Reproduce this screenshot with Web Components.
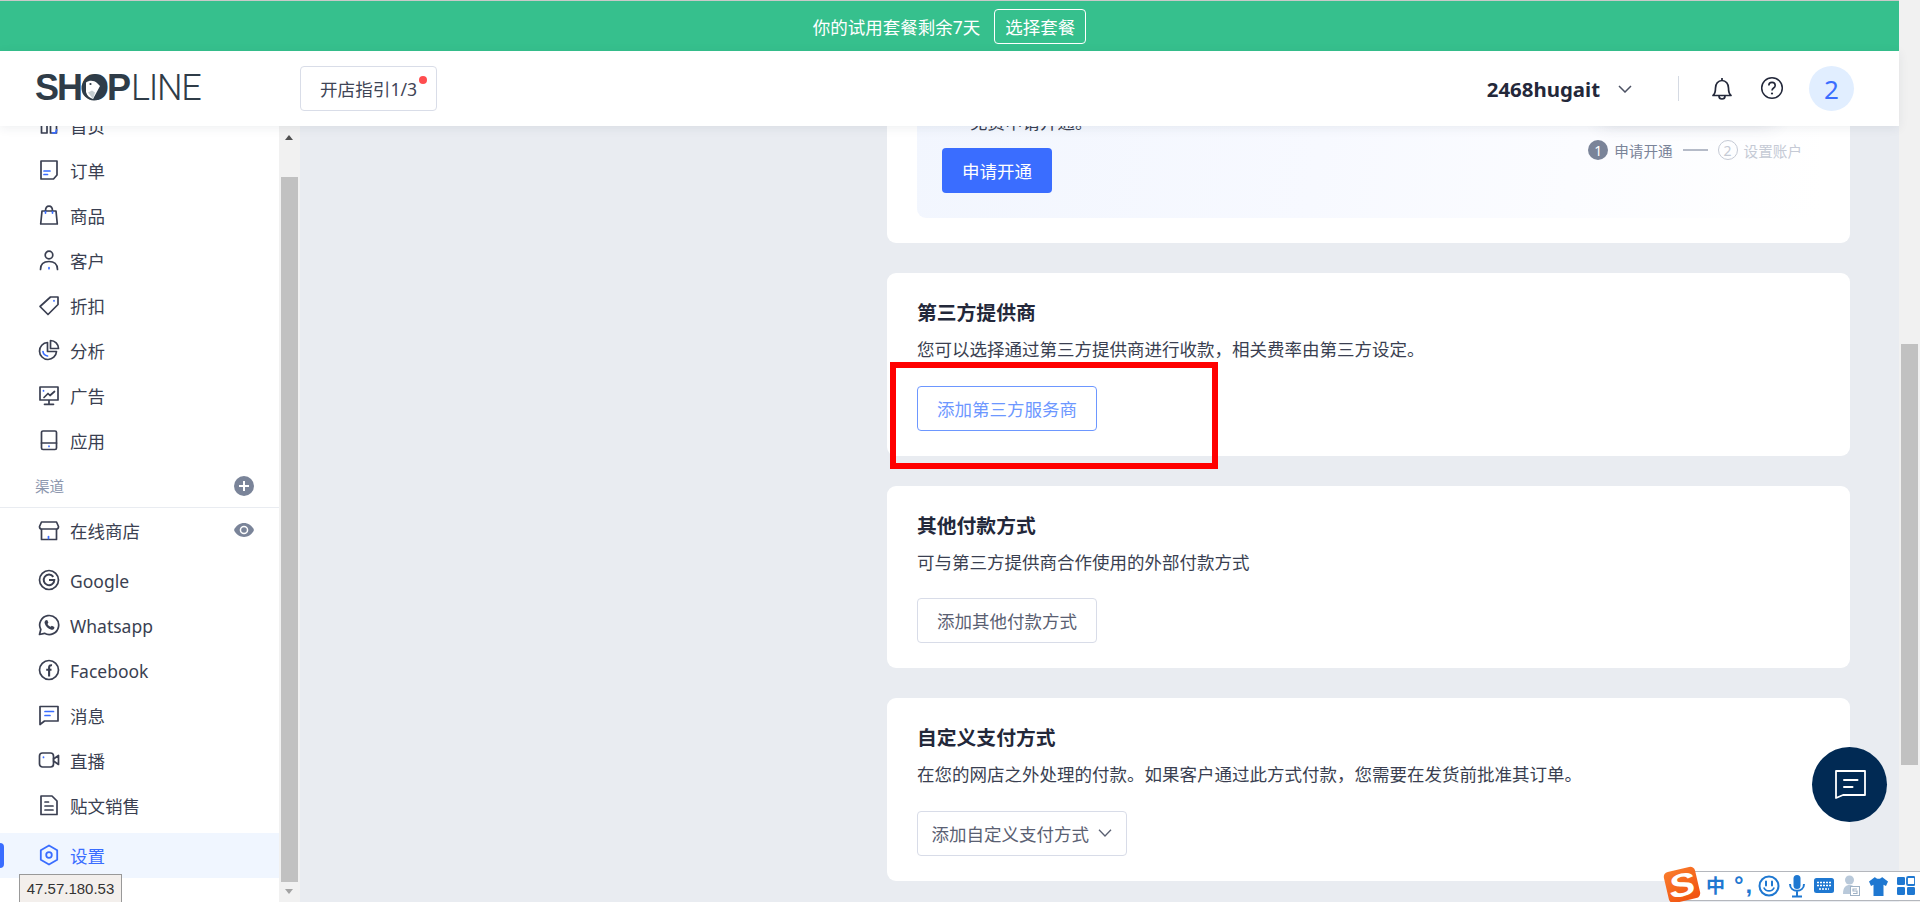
<!DOCTYPE html>
<html lang="zh">
<head>
<meta charset="utf-8">
<title>SHOPLINE</title>
<style>
html, body { margin: 0; height: 902px; overflow: hidden; background: #e9ecf1; }
body { font-family: "Noto Sans", "Noto Sans CJK SC", sans-serif; color: #2d3142; }
</style>
</head>
<body>
<app-shell>
  <trial-banner slot="banner" action="选择套餐">你的试用套餐剩余7天</trial-banner>
  <top-header slot="header" account="2468hugait" avatar="2"></top-header>
  <side-nav slot="nav">
    <nav-item icon="home">首页</nav-item>
    <nav-item icon="order">订单</nav-item>
    <nav-item icon="bag">商品</nav-item>
    <nav-item icon="user">客户</nav-item>
    <nav-item icon="tag">折扣</nav-item>
    <nav-item icon="pie">分析</nav-item>
    <nav-item icon="screen">广告</nav-item>
    <nav-item icon="tablet">应用</nav-item>
    <nav-section>渠道</nav-section>
    <nav-item icon="store" trail="eye">在线商店</nav-item>
    <nav-item icon="google" latin class="gap">Google</nav-item>
    <nav-item icon="whatsapp" latin>Whatsapp</nav-item>
    <nav-item icon="facebook" latin>Facebook</nav-item>
    <nav-item icon="message">消息</nav-item>
    <nav-item icon="video">直播</nav-item>
    <nav-item icon="post">贴文销售</nav-item>
    <nav-item icon="settings" active class="gap">设置</nav-item>
  </side-nav>
  <pay-main slot="main">
    <settings-card flush>
      <apply-panel></apply-panel>
    </settings-card>
    <settings-card heading="第三方提供商" desc="您可以选择通过第三方提供商进行收款，相关费率由第三方设定。">
      <line-button kind="primary">添加第三方服务商</line-button>
    </settings-card>
    <settings-card heading="其他付款方式" desc="可与第三方提供商合作使用的外部付款方式">
      <line-button>添加其他付款方式</line-button>
    </settings-card>
    <settings-card heading="自定义支付方式" desc="在您的网店之外处理的付款。如果客户通过此方式付款，您需要在发货前批准其订单。">
      <line-button caret>添加自定义支付方式</line-button>
    </settings-card>
  </pay-main>
</app-shell>

<script>
const dark = 'fill="none" stroke="#3a3f51" stroke-width="1.7" stroke-linejoin="round" stroke-linecap="round"'
const blue = 'fill="none" stroke="#3a6dff" stroke-width="1.7" stroke-linecap="round"'

// Iconos de la barra lateral, todos sobre una caja de 22x22
const navIcons = {
  home: `<path ${dark} d="M3.500 4v15h5.500V4zM12.500 4v15h6V4z"/><path ${blue} stroke-width="2" d="M14.500 18.800h3.200l1-3"/>`,
  order: `<path ${dark} d="M3 2h16v14l-3.500 4H3z"/><path ${blue} d="M6 12h6M6 15.500h3.500"/>`,
  bag: `<path ${dark} d="M4 7h14l1.300 13H2.700z"/><path ${dark} d="M7.500 7c0-6.500 7-6.500 7 0"/><path ${blue} stroke-width="1.500" d="M7.500 7.500v1.600M14.500 7.500v1.600"/>`,
  user: `<circle ${dark} cx="11" cy="6" r="3.800"/><path ${dark} d="M2.500 20.500c0-5.500 3.500-8 8.500-8s8.500 2.500 8.500 8"/><path ${blue} stroke-width="2" d="M11 18.700v1"/>`,
  tag: `<path ${dark} d="M12.500 3h7.500v7.500L10 20.500 2 12.500z"/><path ${blue} stroke-width="2" d="M16 6.500v.5"/>`,
  pie: `<path ${dark} d="M9.500 3.500a8.500 8.500 0 1 0 9 9h-9z"/><path ${dark} d="M12.500 1.500a8 8 0 0 1 8 8h-8z"/><path ${blue} d="M5 12.500c.3 2.500 2 4 4.500 4.500"/>`,
  screen: `<path ${dark} d="M2 3h18v13H2zM11 16v4M6.500 20.300h9"/><path ${dark} stroke-width="1.400" d="M6 13.500l4-4 2 2 4.500-4"/><path ${blue} stroke-width="2" d="M5.500 6.500v.5"/>`,
  tablet: `<rect ${dark} x="3.500" y="2" width="15" height="18.500" rx="1.500"/><path ${dark} d="M3.500 14h15"/><path ${blue} stroke-width="2" d="M11 17v.5"/>`,
  store: `<path ${dark} d="M3.500 3h15l2 4.500c0 1.800-1 2.500-2 2.500s-7.500 0-15 0c-1 0-2-.7-2-2.500zM3.500 10v10.500h15V10"/><path ${blue} stroke-width="2.200" d="M10.500 17.500v2"/>`,
  google: `<circle ${dark} cx="11" cy="11" r="9.500"/><path fill="none" stroke="#3a3f51" stroke-width="2" stroke-linecap="butt" d="M15.300 7.800A5.300 5.300 0 1 0 16.300 11H11"/>`,
  whatsapp: `<path ${dark} d="M1.500 20.500l1.300-5A9.500 9.500 0 1 1 6.500 19.300z"/><path fill="#3a3f51" d="M7.800 6.200l1.400-.2 1.200 2.600-.9 1.300c.7 1.300 1.700 2.200 3.100 2.900l1.200-1 2.600 1.200-.2 1.500c-.5 1-1.600 1.400-2.800 1.200-3.400-.7-6.100-3.400-6.800-6.700-.2-1.200.3-2.200 1.200-2.800z"/>`,
  facebook: `<circle ${dark} cx="11" cy="11" r="9.500"/><path fill="none" stroke="#3a3f51" stroke-width="2.100" stroke-linecap="butt" d="M14 6.300c-2-.3-2.900.5-2.900 2.300v8.900M8.200 10.800h5.300"/>`,
  message: `<path ${dark} d="M2 2.500h18v14.500H6.500L2 20.500z"/><path ${blue} d="M7 7.500h8.500M7 11.500h5"/>`,
  video: `<rect ${dark} x="1.500" y="4" width="14" height="14" rx="3"/><path ${dark} d="M15.500 10l5-3.500v9l-5-3.500"/><path ${blue} stroke-width="2" d="M5.500 8v.5"/>`,
  post: `<path ${dark} d="M3 2h11l5 5v13.500H3z"/><path ${dark} d="M7 8h3.500M7 12h8M7 16h8"/>`,
  settings: `<path fill="none" stroke="#3a6dff" stroke-width="1.800" stroke-linejoin="round" d="M11 1.500l8.200 4.700v9.600L11 20.500l-8.200-4.700V6.200z"/><circle fill="none" stroke="#3a6dff" stroke-width="1.800" cx="11" cy="11" r="2.800"/>`
}

class AppShell extends HTMLElement {
  constructor() {
    super()
    this.attachShadow({ mode: "open" })
    this.shadowRoot.innerHTML = `
<style>
:host { display: flex; width: 1920px; height: 902px; position: relative; overflow: hidden; }
.left { width: 1899px; display: flex; flex-direction: column; }
.topline { height: 1px; background: #c9c9c9; }
.header { position: relative; z-index: 3; }
.body { flex: 1; display: flex; min-height: 0; }
.mark {
  position: absolute; left: 890px; top: 362px; width: 328px; height: 107px;
  box-sizing: border-box; border: 6px solid #ff0000; z-index: 2;
}
</style>
<div class="left">
  <div class="topline"></div>
  <slot name="banner"></slot>
  <div class="header"><slot name="header"></slot></div>
  <div class="body">
    <slot name="nav"></slot>
    <fake-scroll top="51" thumb="705" arrows></fake-scroll>
    <slot name="main"></slot>
  </div>
</div>
<fake-scroll top="344" thumb="421"></fake-scroll>
<div class="mark"></div>
<chat-fab></chat-fab>
<ip-tip>47.57.180.53</ip-tip>
<ime-bar></ime-bar>`
  }
}

class TrialBanner extends HTMLElement {
  constructor() {
    super()
    this.attachShadow({ mode: "open" })
    this.shadowRoot.innerHTML = `
<style>
:host { display: flex; height: 50px; background: #36c08d; color: #fff; align-items: center; justify-content: center; gap: 14px; font-size: 17.500px; }
.btn { box-sizing: border-box; width: 92px; height: 35px; border: 1px solid #fff; border-radius: 4px; display: flex; align-items: center; justify-content: center; }
</style>
<slot></slot><span class="btn">${this.getAttribute("action")}</span>`
  }
}

class TopHeader extends HTMLElement {
  constructor() {
    super()
    this.attachShadow({ mode: "open" })
    this.shadowRoot.innerHTML = `
<style>
:host { display: flex; height: 75px; background: #fff; align-items: center; box-shadow: 0 2px 10px rgba(40,50,80,.08); }
.logo { margin-left: 35px; width: 265px; display: flex; font-size: 36px; line-height: 40px; letter-spacing: -2px; color: #2f3c48; font-family: "Liberation Sans", sans-serif; font-weight: 700; margin-top: -2px; }
.logo .o { position: relative; display: inline-block; }
.logo .o svg { position: absolute; left: 0; top: 7px; width: 26px; height: 26px; }
.logo .thin { font-family: Roboto, sans-serif; font-weight: 300; letter-spacing: -1.300px; margin-left: 2px; }
.guide { position: relative; box-sizing: border-box; width: 137px; height: 45px; border: 1px solid #d9dde8; border-radius: 4px; display: flex; align-items: center; padding-left: 19px; font-size: 17.600px; color: #3f4556; white-space: nowrap; margin-bottom: 1px; }
.guide i { position: absolute; right: 9px; top: 9px; width: 8px; height: 8px; border-radius: 50%; background: #ff4d4f; }
.right { margin-left: auto; display: flex; align-items: center; }
.acct { font-weight: 700; font-size: 20.400px; color: #23283a; }
.chev { margin-left: 18px; width: 14px; height: 8px; }
.sep { width: 1px; height: 25px; background: #d5dae3; margin: 0 32px 0 46px; }
.bell { width: 22px; height: 24px; margin-right: 27px; }
.help { width: 24px; height: 24px; margin-right: 25px; margin-top: -2px; }
.avatar { width: 45px; height: 45px; border-radius: 50%; background: #e1eeff; color: #3a6dff; display: flex; align-items: center; justify-content: center; font-size: 26px; margin-right: 45px; }
</style>
<div class="logo"><span>SH<span class="o">O<svg viewBox="0 0 26 26"><circle cx="13" cy="13" r="12.500" fill="#2f3c48"/><path fill="#fff" d="M5 7.500C8 5 13 5 16 8l3 3-7 13c-3-1-6-3-7-7z"/><path fill="#c6ced1" d="M7 17.500l5 6.500 2-6.500-3-2z"/><circle cx="9.500" cy="9" r="1.100" fill="#2f3c48"/></svg></span>P</span><span class="thin">LINE</span></div>
<div class="guide">开店指引1/3<i></i></div>
<div class="right">
  <span class="acct">${this.getAttribute("account")}</span>
  <svg class="chev" viewBox="0 0 14 8"><path d="M1 1l6 6 6-6" fill="none" stroke="#4b5163" stroke-width="1.500"/></svg>
  <span class="sep"></span>
  <svg class="bell" viewBox="0 0 22 24"><path d="M2 18.500c2-1.500 2.500-3.500 2.500-7.500 0-4 2.500-7.500 6.500-7.500s6.500 3.500 6.500 7.500c0 4 .5 6 2.500 7.500z" fill="none" stroke="#23283a" stroke-width="1.700" stroke-linejoin="round"/><path d="M11 1v2.500M8 19c0 4 6 4 6 0" fill="none" stroke="#23283a" stroke-width="1.700"/></svg>
  <svg class="help" viewBox="0 0 24 24"><circle cx="12" cy="12" r="10.300" fill="none" stroke="#23283a" stroke-width="1.500"/><path d="M8.800 9.500c0-4.200 6.400-4.200 6.400 0 0 2.600-3.200 2.400-3.200 5" fill="none" stroke="#23283a" stroke-width="1.600"/><circle cx="12" cy="17.500" r="1.100" fill="#23283a"/></svg>
  <span class="avatar">${this.getAttribute("avatar")}</span>
</div>`
  }
}

class SideNav extends HTMLElement {
  constructor() {
    super()
    this.attachShadow({ mode: "open" })
    this.shadowRoot.innerHTML = `
<style>
:host { display: block; width: 279px; background: #fff; overflow: hidden; flex: none; }
.list { margin-top: -23.500px; display: flex; flex-direction: column; }
::slotted(.gap) { margin-top: 5px; }
</style>
<div class="list"><slot></slot></div>`
  }
}

class NavItem extends HTMLElement {
  constructor() {
    super()
    this.attachShadow({ mode: "open" })
    const active = this.hasAttribute("active")
    const latin = this.hasAttribute("latin")
    const eye = this.getAttribute("trail") === "eye"
      ? `<svg class="trail" viewBox="0 0 20 14"><path d="M0 7c4-9.300 16-9.300 20 0-4 9.300-16 9.300-20 0z" fill="#7a8499"/><circle cx="10" cy="7" r="4.300" fill="#fff"/><circle cx="10" cy="7" r="2.800" fill="#7a8499"/></svg>` : ""
    this.shadowRoot.innerHTML = `
<style>
:host { display: flex; align-items: center; height: 45px; padding-left: 38px; font-size: 17.500px; position: relative; color: ${active ? "#3a6dff" : "#3a3f51"}; background: ${active ? "#f0f6ff" : "transparent"}; flex: none; }
svg.icon { width: 22px; height: 22px; margin-right: 10px; flex: none; }
.label { padding-top: ${latin ? "2px" : "0"}; }
.trail { width: 20px; height: 14px; margin-left: auto; margin-right: 25px; }
.bar { position: absolute; left: 0; top: 10px; width: 4px; height: 25px; background: #3a6dff; border-radius: 0 4px 4px 0; }
</style>
${active ? '<span class="bar"></span>' : ""}
<svg class="icon" viewBox="0 0 22 22">${navIcons[this.getAttribute("icon")]}</svg>
<span class="label"><slot></slot></span>${eye}`
  }
}

class NavSection extends HTMLElement {
  constructor() {
    super()
    this.attachShadow({ mode: "open" })
    this.shadowRoot.innerHTML = `
<style>
:host { display: flex; align-items: center; justify-content: space-between; height: 45px; box-sizing: border-box; border-bottom: 1px solid #e9ecf1; padding: 2px 25px 0 35px; font-size: 14.600px; color: #8d97ae; flex: none; }
svg { width: 20px; height: 20px; }
</style>
<slot></slot>
<svg viewBox="0 0 20 20"><circle cx="10" cy="10" r="10" fill="#7a8499"/><path d="M10 5v10M5 10h10" stroke="#fff" stroke-width="2"/></svg>`
  }
}

class FakeScroll extends HTMLElement {
  constructor() {
    super()
    this.attachShadow({ mode: "open" })
    const top = this.getAttribute("top")
    const thumb = this.getAttribute("thumb")
    const arrows = this.hasAttribute("arrows")
    this.shadowRoot.innerHTML = `
<style>
:host { display: block; width: 21px; flex: none; background: #f1f1f1; position: relative; }
.thumb { position: absolute; left: 2px; width: 17px; top: ${top}px; height: ${thumb}px; background: #c1c1c1; }
.up, .down { position: absolute; left: 6px; width: 0; height: 0; border-left: 4.500px solid transparent; border-right: 4.500px solid transparent; }
.up { top: 9px; border-bottom: 5px solid #505050; }
.down { bottom: 8px; border-top: 5px solid #a3a3a3; }
</style>
<div class="thumb"></div>${arrows ? '<i class="up"></i><i class="down"></i>' : ""}`
  }
}

class PayMain extends HTMLElement {
  constructor() {
    super()
    this.attachShadow({ mode: "open" })
    this.shadowRoot.innerHTML = `
<style>
:host { display: block; flex: 1; overflow: hidden; background: #e9ecf1; }
.col { width: 963px; margin: -100px 0 0 587px; display: flex; flex-direction: column; gap: 30px; }
</style>
<div class="col"><slot></slot></div>`
  }
}

class SettingsCard extends HTMLElement {
  constructor() {
    super()
    this.attachShadow({ mode: "open" })
    const flush = this.hasAttribute("flush")
    const head = flush ? "" : `<h3>${this.getAttribute("heading")}</h3><p>${this.getAttribute("desc")}</p>`
    this.shadowRoot.innerHTML = `
<style>
:host { display: block; background: #fff; border-radius: 9px; box-sizing: border-box; padding: 28px 30px 25px; height: ${flush ? "217.200px" : "182.600px"}; }
h3 { margin: 0; font-size: 19.800px; line-height: 24px; font-weight: 700; color: #23283a; }
p { margin: 12px 0 24.600px; font-size: 17.500px; line-height: 24px; color: #3a3f51; white-space: nowrap; }
</style>
${head}<slot></slot>`
  }
}

class LineButton extends HTMLElement {
  constructor() {
    super()
    this.attachShadow({ mode: "open" })
    const primary = this.getAttribute("kind") === "primary"
    const caret = this.hasAttribute("caret")
    this.shadowRoot.innerHTML = `
<style>
:host { display: inline-flex; box-sizing: border-box; height: 45px; align-items: center; justify-content: center; width: ${caret ? "209.500px" : "180px"}; border: 1px solid ${primary ? "#6d97ff" : "#d8dce8"}; border-radius: 4px; font-size: 17.500px; color: ${primary ? "#6d97ff" : "#5a6072"}; white-space: nowrap; vertical-align: top; gap: 9px; }
svg { width: 14px; height: 8px; }
</style>
<slot></slot>${caret ? '<svg viewBox="0 0 14 8"><path d="M1 .7l6 6.300 6-6.300" fill="none" stroke="#5a6072" stroke-width="1.300"/></svg>' : ""}`
  }
}

class ApplyPanel extends HTMLElement {
  constructor() {
    super()
    this.attachShadow({ mode: "open" })
    this.shadowRoot.innerHTML = `
<style>
:host { display: flex; position: relative; height: 164px; box-sizing: border-box; border-radius: 9px; padding: 0 18px 25px 25px; justify-content: space-between; background: linear-gradient(100deg, #f2f6fe 0, #f7f9ff 45%, #fff 100%); }
.left { display: flex; flex-direction: column; justify-content: flex-end; }
.note { padding-left: 28px; font-size: 17.500px; line-height: 24px; margin-bottom: 14px; color: #3a3f51; }
.apply { box-sizing: border-box; width: 110px; height: 45px; background: #3a6dff; color: #fff; border-radius: 4px; display: flex; align-items: center; justify-content: center; font-size: 17.500px; }
.steps { display: flex; align-items: center; height: 20px; margin-top: 86px; font-size: 14.600px; color: #7a8499; position: relative; }
.steps b { width: 20px; height: 20px; box-sizing: border-box; border-radius: 50%; background: #7a8499; color: #fff; font-weight: 400; font-size: 14px; display: flex; align-items: center; justify-content: center; margin-right: 6px; }
.steps u { width: 25px; height: 2px; background: #b5bbc8; margin: 0 10px; }
.next { color: #c5cad5; }
.next b { background: none; border: 1px solid #c5cad5; color: #c5cad5; }
.next, .cur { display: flex; align-items: center; }
.glow { position: absolute; left: 683px; top: 0; width: 175px; height: 66px; background: #fff; box-shadow: 0 4px 18px rgba(60,70,100,.16); border-radius: 6px; }
</style>
<div class="glow"></div>
<div class="left"><div class="note">免费申请开通。</div><div class="apply">申请开通</div></div>
<div class="steps"><span class="cur"><b>1</b>申请开通</span><u></u><span class="next"><b>2</b>设置账户</span></div>`
  }
}

class ChatFab extends HTMLElement {
  constructor() {
    super()
    this.attachShadow({ mode: "open" })
    this.shadowRoot.innerHTML = `
<style>
:host { position: absolute; left: 1811.500px; top: 746.500px; width: 75px; height: 75px; border-radius: 50%; background: #012a54; display: flex; align-items: center; justify-content: center; z-index: 4; }
svg { width: 32px; height: 29px; margin-left: 3px; }
</style>
<svg viewBox="0 0 32 29"><path d="M1 1h29v24H8l-7 3z" fill="none" stroke="#fff" stroke-width="1.800" stroke-linejoin="round"/><path d="M9 10h13.500M9 17h8.500" stroke="#fff" stroke-width="2" stroke-linecap="round"/></svg>`
  }
}

class IpTip extends HTMLElement {
  constructor() {
    super()
    this.attachShadow({ mode: "open" })
    this.shadowRoot.innerHTML = `
<style>
:host { position: absolute; left: 19px; top: 874px; width: 103px; height: 29px; box-sizing: border-box; border: 1px solid #999; background: #f3efec; color: #333; font: 15px "Liberation Sans", sans-serif; display: flex; align-items: center; justify-content: center; padding-bottom: 1px; z-index: 4; }
</style>
<slot></slot>`
  }
}

class ImeBar extends HTMLElement {
  constructor() {
    super()
    this.attachShadow({ mode: "open" })
    const c = "#1f78d1"
    this.shadowRoot.innerHTML = `
<style>
:host { position: absolute; left: 1680px; right: 0; top: 871px; height: 30px; box-sizing: border-box; border-top: 1px solid #b4b7bd; border-bottom: 1px solid #b4b7bd; background: #fff; display: flex; align-items: center; color: ${c}; z-index: 5; }
.s { position: absolute; left: -14.500px; top: -3.500px; width: 32px; height: 32px; border-radius: 5px; transform: rotate(-13deg); background: linear-gradient(160deg, #f97c2c, #f1500f); color: #fff; font: italic 700 32px/32px "Liberation Sans", sans-serif; display: flex; align-items: center; justify-content: center; overflow: hidden; }
.s span { display: block; transform: scaleX(1.250); }
.zh { position: absolute; left: 26px; top: 1px; font-size: 19px; line-height: 26px; font-weight: 700; }
.pt { position: absolute; left: 54px; top: -2px; font: 700 24px/30px "Liberation Sans", sans-serif; letter-spacing: 2px; }
svg { position: absolute; top: 2px; height: 24px; }
</style>
<span class="s"><span>S</span></span>
<span class="zh">中</span>
<span class="pt">°,</span>
<svg style="left:78px;width:22px" viewBox="0 0 22 24"><circle cx="11" cy="12" r="9.500" fill="none" stroke="${c}" stroke-width="2"/><path d="M8 7.500v4M14 7.500v4" stroke="${c}" stroke-width="2" stroke-linecap="round"/><path d="M5.800 13.500c2 4.500 8.400 4.500 10.400 0" fill="none" stroke="${c}" stroke-width="1.700"/></svg>
<svg style="left:108px;width:18px" viewBox="0 0 18 24"><rect x="5.500" y="1" width="7" height="14" rx="3.500" fill="${c}"/><path d="M2 10c0 9 14 9 14 0M9 17v5M4 22.500h10" fill="none" stroke="${c}" stroke-width="2"/></svg>
<svg style="left:134px;width:20px" viewBox="0 0 20 24"><rect y="4" width="20" height="15" rx="2.500" fill="${c}"/><path d="M3 8.500h14M3 11.500h14M5 15h10" stroke="#fff" stroke-width="1.600" stroke-dasharray="2 1"/></svg>
<svg style="left:162px;width:18px" viewBox="0 0 18 24"><circle cx="7.500" cy="6" r="4.500" fill="#b9c9da"/><path d="M1 20c0-7 3-9 6.500-9s4 1 4 2.500V20z" fill="#b9c9da"/><rect x="8.500" y="12.500" width="9" height="9" fill="#fff" stroke="#9fb2c6"/><path d="M15 15h-4v2h4v2.500h-4" fill="none" stroke="#9fb2c6" stroke-width="1.100"/></svg>
<svg style="left:189px;width:19px" viewBox="0 0 19 24"><path d="M6 3L0 7.500l2 4.500 2.500-1.200V22h10V10.800L17 12l2-4.500L13 3c-.8 2.400-6.200 2.400-7 0z" fill="${c}"/></svg>
<svg style="left:217px;width:18px" viewBox="0 0 18 24"><rect y="3" width="8" height="8" rx="1.300" fill="${c}"/><rect x="10" y="3" width="8" height="8" rx="1.300" fill="none" stroke="${c}" stroke-width="1.800"/><rect y="13" width="8" height="8" rx="1.300" fill="${c}"/><rect x="10" y="13" width="8" height="8" rx="1.300" fill="${c}"/></svg>`
  }
}

customElements.define("fake-scroll", FakeScroll)
customElements.define("chat-fab", ChatFab)
customElements.define("ip-tip", IpTip)
customElements.define("ime-bar", ImeBar)
customElements.define("app-shell", AppShell)
customElements.define("trial-banner", TrialBanner)
customElements.define("top-header", TopHeader)
customElements.define("side-nav", SideNav)
customElements.define("nav-item", NavItem)
customElements.define("nav-section", NavSection)
customElements.define("pay-main", PayMain)
customElements.define("settings-card", SettingsCard)
customElements.define("line-button", LineButton)
customElements.define("apply-panel", ApplyPanel)
</script>
</body>
</html>
